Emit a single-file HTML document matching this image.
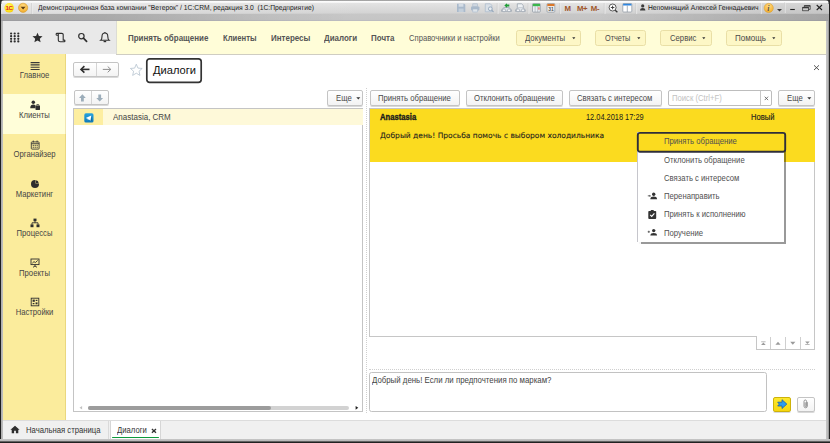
<!DOCTYPE html>
<html lang="ru">
<head>
<meta charset="utf-8">
<title>Диалоги</title>
<style>
html,body{margin:0;padding:0;}
body{width:830px;height:443px;overflow:hidden;position:relative;background:#fff;font-family:"Liberation Sans",sans-serif;font-size:7.7px;color:#333;}
.abs{position:absolute;}
.sq{font-size:8.500px !important;transform:scaleX(.906);transform-origin:0 50%;}
.sqc{font-size:8.400px !important;transform:scaleX(.917);transform-origin:50% 50%;}
.t{position:absolute;white-space:nowrap;line-height:1;}
/* window frame */
#frame{left:0;top:0;width:830px;height:443px;background:#8a8a8a;}
#titlebar{left:0;top:0;width:830px;height:21px;background:linear-gradient(#9c9c9c 0,#a6a6a6 0.6px,#fdfdfd 1.1px,#f8f8f8 2.4px,#e3e3e3 3.2px,#d4d4d4 12.8px,#c7c7c7 14.2px,#c5c5c5 20.1px,#bcbcc0 20.5px,#bcbcc0 21px);}
#frameL{left:0;top:21px;width:3.4px;height:422px;background:linear-gradient(90deg,#1c1c1c 0,#222 1px,#b0b0b0 1.5px,#c6c6c6 3.4px);}
#frameR{left:826px;top:21px;width:4px;height:422px;background:linear-gradient(90deg,#c8c8c8 0,#b4b4b4 2.4px,#2a2a2a 3px,#1c1c1c 4px);}
#frameB{left:0;top:439px;width:830px;height:4px;background:linear-gradient(#c8c8c8 0,#b4b4b4 2.2px,#2a2a2a 2.7px,#1c1c1c 4px);}
#client{left:3px;top:21px;width:823px;height:418px;background:#fff;}
/* tools panel */
#tools{left:3px;top:21px;width:113px;height:33px;background:#e9e9e9;}
#topnav{left:116px;top:21px;width:710px;height:33px;background:#fffdd8;border-left:1px solid #dcdcd4;box-sizing:border-box;}
#sidebar{left:3px;top:54px;width:63.300px;height:366px;background:#fbec9c;}
#sidesel{left:3px;top:94px;width:63px;height:40px;background:#fffed9;}
#tabbar{left:3px;top:420px;width:823px;height:19px;background:#f0f0f0;border-top:1px solid #dcdcdc;box-sizing:border-box;}
.nav{font-size:8.400px;font-weight:bold;color:#555;top:33.600px;transform:scaleX(.952);transform-origin:0 50%;}
.navn{font-size:8.400px;color:#555;top:33.600px;}
.ybtn{position:absolute;top:30px;height:15.500px;box-sizing:border-box;border:1px solid #e9dfa6;border-radius:2.500px;background:#fdf7c6;font-size:8.400px;color:#4a4a4a;text-align:left;}
.btn{position:absolute;box-sizing:border-box;border:1px solid #c4c4c4;border-radius:2px;background:linear-gradient(#fff,#f3f3f3);font-size:7.7px;color:#444;box-shadow:0 1px 0 #d9d9d9;}
.btn .t{top:3.200px;color:#4a4a4a;font-size:8.500px;transform:scaleX(.906);transform-origin:0 50%;}
.side{font-size:7.7px;color:#444;text-align:center;width:63px;left:3px;}
.mi{font-size:7.7px;color:#505050;left:664.300px;}
</style>
</head>
<body>
<div id="frame" class="abs"></div>
<div id="client" class="abs"></div>
<div id="titlebar" class="abs"></div>
<div class="abs" style="left:0;top:13.500px;width:830px;height:7.500px;background:linear-gradient(90deg,rgba(0,0,0,.17) 0,rgba(0,0,0,.15) 12%,rgba(0,0,0,.04) 32%,rgba(0,0,0,0) 42%,rgba(0,0,0,0) 72%,rgba(0,0,0,.10) 88%,rgba(0,0,0,.17) 100%);"></div>
<div class="abs" style="left:0;top:2.500px;width:830px;height:11px;background:linear-gradient(90deg,rgba(255,255,255,.25) 0,rgba(255,255,255,.1) 25%,rgba(0,0,0,0) 45%,rgba(0,0,0,0) 75%,rgba(0,0,0,.07) 100%);"></div>
<div id="tools" class="abs"></div>
<div id="topnav" class="abs"></div>
<div id="sidebar" class="abs"></div>
<div id="sidesel" class="abs"></div>
<div class="abs" style="left:65px;top:54px;width:1.300px;height:366px;background:#ead77e;"></div>
<div class="abs" style="left:65px;top:94px;width:1.300px;height:40px;background:#efe5b0;"></div>
<div id="tabbar" class="abs"></div>
<div id="frameL" class="abs"></div>
<div id="frameR" class="abs"></div>
<div id="frameB" class="abs"></div>
<div class="abs" style="left:0;top:0;width:1.300px;height:21px;background:#222;"></div>
<div class="abs" style="left:828.600px;top:0;width:1.400px;height:21px;background:#222;"></div>
<svg class="abs" style="left:0;top:0;" width="830" height="4" viewBox="0 0 830 4"><path d="M0 0H4.500A3.200 3.200 0 0 0 1.300 3.200V4H0Z" fill="#2a2a2a"/><path d="M830 0H825.400A3.200 3.200 0 0 1 828.600 3.200V4H830Z" fill="#2a2a2a"/></svg>


<!-- tools icons -->
<svg class="abs" style="left:9px;top:31px;" width="12" height="12" viewBox="0 0 12 12">
 <g fill="#2e2e2e"><circle cx="2.1" cy="2.5" r="1.12"/><circle cx="5.7" cy="2.5" r="1.12"/><circle cx="9.3" cy="2.5" r="1.12"/>
 <circle cx="2.1" cy="5.2" r="1.12"/><circle cx="5.7" cy="5.2" r="1.12"/><circle cx="9.3" cy="5.2" r="1.12"/>
 <circle cx="2.1" cy="7.8" r="1.12"/><circle cx="5.7" cy="7.8" r="1.12"/><circle cx="9.3" cy="7.8" r="1.12"/>
 <circle cx="2.1" cy="10.4" r="1.12"/><circle cx="5.7" cy="10.4" r="1.12"/><circle cx="9.3" cy="10.4" r="1.12"/></g>
</svg>
<svg class="abs" style="left:32px;top:32px;" width="11" height="11" viewBox="0 0 24 24"><path fill="#2e2e2e" d="M12 1.5l3.1 7.3 7.9.7-6 5.2 1.8 7.8L12 18.3 5.2 22.500l1.800-7.800-6-5.200 7.900-.700z"/></svg>
<svg class="abs" style="left:55px;top:32px;" width="11" height="11" viewBox="0 0 11 11"><path fill="none" stroke="#2e2e2e" stroke-width="1.1" d="M3.3 3.200V1.400H1.700C.9 1.400.9 3.200 1.700 3.200H3.300V8.200C3.300 9.800 5 9.800 5.300 9.800H9.200C10.200 9.800 10.200 8.100 9.200 8.100H8.200V2.600C8.200 1.400 7.200 1.400 6.800 1.400H3.300"/></svg>
<svg class="abs" style="left:77px;top:32px;" width="11" height="11" viewBox="0 0 11 11"><circle cx="4.400" cy="4.200" r="2.700" fill="none" stroke="#2e2e2e" stroke-width="1.200"/><path d="M6.400 6.200L9.600 9.400" stroke="#2e2e2e" stroke-width="1.700" stroke-linecap="round"/></svg>
<svg class="abs" style="left:99px;top:31px;" width="12" height="12" viewBox="0 0 12 12"><path fill="none" stroke="#2e2e2e" stroke-width="1.100" d="M1.700 9.200H10.100C9 8.300 8.800 7.400 8.800 5.400C8.800 3.300 7.500 2 5.900 2C4.300 2 3 3.300 3 5.400C3 7.400 2.800 8.300 1.700 9.200Z"/><path d="M4.600 10.600H7.200" stroke="#2e2e2e" stroke-width="1.200"/><path d="M5.900 1V2" stroke="#2e2e2e" stroke-width="1.100"/></svg>


<!-- titlebar icons -->
<svg class="abs" style="left:0;top:0;" width="830" height="21" viewBox="0 0 830 21">
 <defs>
  <radialGradient id="g1c" cx="0.45" cy="0.35" r="0.7"><stop offset="0" stop-color="#fff56a"/><stop offset="0.7" stop-color="#ffe21a"/><stop offset="1" stop-color="#f3c40e"/></radialGradient>
  <radialGradient id="gdd" cx="0.5" cy="0.3" r="0.8"><stop offset="0" stop-color="#ffd980"/><stop offset="0.7" stop-color="#f6b73c"/><stop offset="1" stop-color="#e09a20"/></radialGradient>
 </defs>
 <circle cx="9.200" cy="7.800" r="4.800" fill="url(#g1c)"/>
 <text x="5.600" y="10.100" font-family="Liberation Sans, sans-serif" font-weight="bold" font-size="6.200" fill="#e31e24" letter-spacing="-0.600">1С</text>
 <circle cx="23.100" cy="7.800" r="4.600" fill="url(#gdd)" stroke="#d69a2c" stroke-width="0.600"/>
 <path d="M20.600 6.700H25.600L23.100 9.600Z" fill="#5a3a10"/>
 <path d="M31.500 3V14" stroke="#c4c4c4" stroke-width="0.700"/><path d="M32.200 3V14" stroke="#f2f2f2" stroke-width="0.700"/>
 <!-- save -->
 <g fill="#a9b9cb"><path d="M457 3.700H464.300L465.300 4.700V12H457Z"/></g>
 <rect x="458.600" y="3.700" width="4.800" height="3" fill="#d5dde6"/><rect x="458.600" y="8.600" width="5" height="3.400" fill="#c3cfdb"/>
 <!-- print -->
 <g><rect x="472.800" y="3.800" width="4.800" height="3" fill="#cfd7e0" stroke="#a9b9cb" stroke-width="0.600"/><rect x="471" y="6.400" width="8.400" height="4" rx="0.800" fill="#a9b9cb"/><rect x="472.800" y="9" width="4.800" height="3" fill="#dfe5ea" stroke="#a9b9cb" stroke-width="0.600"/></g>
 <!-- preview -->
 <g><path d="M485.300 3.800H490.300L491.800 5.300V11.800H485.300Z" fill="#d9e0e7" stroke="#a9b9cb" stroke-width="0.700"/><circle cx="490.300" cy="8.800" r="1.900" fill="#e8edf2" stroke="#94a7bb" stroke-width="0.900"/><path d="M491.700 10.200L493.500 12" stroke="#94a7bb" stroke-width="1.100"/></g>
 <path d="M497.300 3V14" stroke="#c4c4c4" stroke-width="0.700"/><path d="M498 3V14" stroke="#f2f2f2" stroke-width="0.700"/>
 <!-- link1 -->
 <g><path d="M501.500 11.300C501.500 9.300 503 8 504.500 7.500H508.500C510 8 511.500 9.300 511.500 11.300Z" fill="#dfe3e8" stroke="#8e99a6" stroke-width="0.700"/><circle cx="504" cy="10.300" r="1.500" fill="#f4f6f8" stroke="#8e99a6" stroke-width="0.600"/><circle cx="509" cy="10.300" r="1.500" fill="#f4f6f8" stroke="#8e99a6" stroke-width="0.600"/><path d="M504.300 5.500L507 3.200V4.600H509.300V6.500H507V7.800Z" fill="#1f9d36"/></g>
 <!-- link2 -->
 <g><path d="M515.500 11.300C515.500 9.300 517 8 518.500 7.500H522.500C524 8 525.300 9.300 525.300 11.300Z" fill="#dfe3e8" stroke="#8e99a6" stroke-width="0.700"/><path d="M517.300 7.600V3.800H521.500L523.300 5.500V7.600" fill="#eef1f4" stroke="#8e99a6" stroke-width="0.700"/><circle cx="518" cy="10.300" r="1.500" fill="#f4f6f8" stroke="#8e99a6" stroke-width="0.600"/><circle cx="523" cy="10.300" r="1.500" fill="#f4f6f8" stroke="#8e99a6" stroke-width="0.600"/></g>
 <path d="M528.200 3V14" stroke="#c4c4c4" stroke-width="0.700"/><path d="M528.900 3V14" stroke="#f2f2f2" stroke-width="0.700"/>
 <!-- calc -->
 <g><rect x="532.500" y="3.600" width="7.800" height="8.500" rx="0.800" fill="#eceff2" stroke="#8a949e" stroke-width="0.700"/><rect x="532.800" y="3.900" width="7.200" height="2.300" fill="#3cb64a"/><path d="M535.100 6.200V12M537.700 6.200V12" stroke="#9aa3ad" stroke-width="0.600"/><rect x="538" y="7.300" width="1.800" height="2.300" fill="#e88a8a"/></g>
 <!-- calendar -->
 <g><rect x="547" y="3.600" width="7.800" height="8.500" rx="0.800" fill="#f4f5f6" stroke="#8a949e" stroke-width="0.700"/><rect x="547.300" y="3.900" width="7.200" height="2.200" fill="#d9772b"/><text x="548.200" y="11.200" font-family="Liberation Sans, sans-serif" font-size="5" font-weight="bold" fill="#555">31</text></g>
 <path d="M560 3V14" stroke="#c4c4c4" stroke-width="0.700"/><path d="M560.700 3V14" stroke="#f2f2f2" stroke-width="0.700"/>
 <g font-family="Liberation Sans, sans-serif" font-weight="bold" font-size="7.800" fill="#a0562a"><text x="564.600" y="10.700">M</text><text x="577" y="10.700" letter-spacing="-0.600">M+</text><text x="590.800" y="10.700" letter-spacing="-0.300">M-</text></g>
 <path d="M604.300 3V14" stroke="#c4c4c4" stroke-width="0.700"/><path d="M605 3V14" stroke="#f2f2f2" stroke-width="0.700"/>
 <!-- zoom -->
 <g><circle cx="612.600" cy="7.500" r="3.500" fill="#fff" stroke="#333" stroke-width="0.800"/><path d="M610.800 7.500H614.400M612.600 5.700V9.300" stroke="#333" stroke-width="0.900"/><path d="M615.200 10.200L617.400 12.300" stroke="#333" stroke-width="1.300"/></g>
 <!-- panel -->
 <g><rect x="622.800" y="3.500" width="9" height="8.500" rx="0.800" fill="#fff" stroke="#8a949e" stroke-width="0.700"/><rect x="623.100" y="3.800" width="8.400" height="1.700" fill="#2f86e0"/><path d="M627.300 5.500V12" stroke="#8a949e" stroke-width="0.700"/></g>
 <path d="M636 3V14" stroke="#c4c4c4" stroke-width="0.700"/><path d="M636.700 3V14" stroke="#f2f2f2" stroke-width="0.700"/>
 <!-- user -->
 <g fill="#3a3a3a"><circle cx="642.700" cy="5.900" r="1.600"/><path d="M640 10.600C640 8.600 641.300 7.900 642.700 7.900C644.100 7.900 645.400 8.600 645.400 10.600Z"/></g>
 <path d="M760.600 3V14" stroke="#c4c4c4" stroke-width="0.700"/><path d="M761.300 3V14" stroke="#f2f2f2" stroke-width="0.700"/>
 <!-- info -->
 <circle cx="768.700" cy="8" r="4.600" fill="url(#gdd)" stroke="#dca238" stroke-width="0.600"/>
 <text x="767.300" y="10.700" font-family="Liberation Serif, serif" font-weight="bold" font-style="italic" font-size="8" fill="#5c5648">i</text>
 <path d="M777 9H782L779.500 11.400Z" fill="#3a3a3a"/>
 <path d="M784.500 2.500V13" stroke="#c4c4c4" stroke-width="0.700"/><path d="M785.200 2.500V13" stroke="#f2f2f2" stroke-width="0.700"/>
 <path d="M790.200 9.500H794.800" stroke="#222" stroke-width="1.100"/>
 <g fill="none" stroke="#2a2a2a" stroke-width="0.700"><path d="M804.300 7.200V5.600H810.200V9.400H808.500"/><rect x="802.700" y="7.300" width="5.800" height="3.500" fill="none"/></g>
 <path d="M802.700 7.700H808.500M804.300 6H810.200" stroke="#2a2a2a" stroke-width="1.100"/>
 <path d="M816.700 5L822 10M822 5L816.700 10" stroke="#222" stroke-width="1.050"/>
</svg>

<!-- title -->
<span class="t" id="title" style="left:38.4px;top:3.7px;font-size:7.3px;transform:scaleX(.922);transform-origin:0 50%;color:#1a1a1a;text-rendering:geometricPrecision;">Демонстрационная база компании "Ветерок" / 1С:CRM, редакция 3.0&nbsp; (1С:Предприятие)</span>
<span class="t" id="user" style="left:647.8px;top:3.7px;font-size:7.3px;transform:scaleX(.918);transform-origin:0 50%;color:#1a1a1a;text-rendering:geometricPrecision;">Непомнящий Алексей Геннадьевич</span>

<!-- top nav -->
<span class="t nav" style="left:127.600px;">Принять обращение</span>
<span class="t nav" style="left:222.800px;transform:scaleX(.918);">Клиенты</span>
<span class="t nav" style="left:271.400px;">Интересы</span>
<span class="t nav" style="left:324px;">Диалоги</span>
<span class="t nav" style="left:371.400px;">Почта</span>
<span class="t navn" style="left:408.800px;transform:scaleX(.911);transform-origin:0 50%;">Справочники и настройки</span>
<div class="ybtn" style="left:516.4px;width:64.4px;"><span class="t" style="left:7.6px;top:2.900px;transform:scaleX(.928);transform-origin:0 50%;">Документы</span><svg class="abs" style="left:54.2px;top:6px;" width="4" height="3" viewBox="0 0 4 3"><path d="M0.200 0.300H3.400L1.800 2.300Z" fill="#333"/></svg></div>
<div class="ybtn" style="left:595.0px;width:50.6px;"><span class="t" style="left:8.7px;top:2.900px;transform:scaleX(.873);transform-origin:0 50%;">Отчеты</span><svg class="abs" style="left:41.2px;top:6px;" width="4" height="3" viewBox="0 0 4 3"><path d="M0.200 0.300H3.400L1.800 2.300Z" fill="#333"/></svg></div>
<div class="ybtn" style="left:660.0px;width:51.8px;"><span class="t" style="left:8.7px;top:2.900px;transform:scaleX(.921);transform-origin:0 50%;">Сервис</span><svg class="abs" style="left:41.4px;top:6px;" width="4" height="3" viewBox="0 0 4 3"><path d="M0.200 0.300H3.400L1.800 2.300Z" fill="#333"/></svg></div>
<div class="ybtn" style="left:725.5px;width:56.0px;"><span class="t" style="left:8.7px;top:2.900px;transform:scaleX(.955);transform-origin:0 50%;">Помощь</span><svg class="abs" style="left:45.5px;top:6px;" width="4" height="3" viewBox="0 0 4 3"><path d="M0.200 0.300H3.400L1.800 2.300Z" fill="#333"/></svg></div>

<!-- sidebar icons -->
<svg class="abs" style="left:29.500px;top:60.500px;" width="10" height="10" viewBox="0 0 10 10"><path d="M0.600 1.600H9.600M0.600 3.900H9.600M0.600 6.200H9.600M0.600 8.500H9.600" stroke="#3a3a3a" stroke-width="1.150"/></svg>
<svg class="abs" style="left:29.500px;top:99.500px;" width="10" height="10" viewBox="0 0 10 10"><g fill="#2e2e2e"><circle cx="3.300" cy="2.200" r="1.750"/><path d="M0.200 8.200C0.200 5.600 1.600 4.600 3.300 4.600C4.300 4.600 5 4.900 5.500 5.500V8.200Z"/><rect x="5.500" y="5.400" width="4.500" height="4.500" rx="0.400"/><path d="M6.800 5.500V4.500H8.700V5.500" fill="none" stroke="#2e2e2e" stroke-width="0.700"/></g></svg>
<svg class="abs" style="left:29.500px;top:139.500px;" width="10" height="10" viewBox="0 0 10 10"><rect x="1.300" y="1.900" width="7.800" height="7.200" rx="0.700" fill="none" stroke="#3a3a3a" stroke-width="0.900"/><path d="M1.300 3.700H9.100" stroke="#3a3a3a" stroke-width="0.900"/><path d="M3.300 0.600V2.400M7.100 0.600V2.400" stroke="#3a3a3a" stroke-width="1"/><g fill="#3a3a3a"><rect x="2.700" y="4.800" width="1.100" height="1.100"/><rect x="4.650" y="4.800" width="1.100" height="1.100"/><rect x="6.600" y="4.800" width="1.100" height="1.100"/><rect x="2.700" y="6.700" width="1.100" height="1.100"/><rect x="4.650" y="6.700" width="1.100" height="1.100"/><rect x="6.600" y="6.700" width="1.100" height="1.100"/></g></svg>
<svg class="abs" style="left:29.500px;top:178.700px;" width="10" height="10" viewBox="0 0 10 10"><circle cx="5" cy="5" r="4" fill="#2e2e2e"/><path d="M5.500 4.500V0.500A4 4 0 0 1 9.500 4.500Z" fill="#fbec9c"/><path d="M5.800 4.200V1.300A3.200 3.200 0 0 1 8.700 4.200Z" fill="#2e2e2e"/></svg>
<svg class="abs" style="left:29.500px;top:218.200px;" width="10" height="10" viewBox="0 0 10 10"><g fill="#2e2e2e"><rect x="3.500" y="0.600" width="3" height="2.600"/><rect x="0.500" y="6.400" width="3" height="2.800"/><rect x="6.500" y="6.400" width="3" height="2.800"/></g><path d="M5 3V4.800M2 6.500V4.800H8V6.500" fill="none" stroke="#2e2e2e" stroke-width="0.900"/></svg>
<svg class="abs" style="left:29.500px;top:257.500px;" width="10" height="10" viewBox="0 0 10 10"><rect x="1" y="1" width="8" height="5.600" fill="none" stroke="#2e2e2e" stroke-width="0.900"/><path d="M2.300 5.200L4 3.600L5.400 4.600L7.700 2.400" fill="none" stroke="#2e2e2e" stroke-width="0.900"/><path d="M5 6.600V8.300M3 9.300L5 8L7 9.300" fill="none" stroke="#2e2e2e" stroke-width="0.900"/></svg>
<svg class="abs" style="left:29.500px;top:297.200px;" width="10" height="10" viewBox="0 0 10 10"><rect x="1.200" y="1.200" width="7.600" height="7.600" fill="none" stroke="#2e2e2e" stroke-width="0.900"/><g fill="#2e2e2e"><rect x="2.600" y="2.600" width="2.200" height="2.200"/><rect x="5.600" y="5.400" width="1.900" height="1.900"/><rect x="2.700" y="6" width="1.700" height="1.200"/><rect x="5.700" y="2.800" width="1.700" height="1.200"/></g></svg>

<!-- sidebar labels -->
<span class="t side sqc" style="top:71.4px;">Главное</span>
<span class="t side sqc" style="top:110.9px;">Клиенты</span>
<span class="t side sqc" style="top:150.4px;">Органайзер</span>
<span class="t side sqc" style="top:189.9px;">Маркетинг</span>
<span class="t side sqc" style="top:229.4px;">Процессы</span>
<span class="t side sqc" style="top:268.9px;">Проекты</span>
<span class="t side sqc" style="top:308.4px;">Настройки</span>

<!-- header -->
<div class="btn" style="left:73.400px;top:62px;width:45.200px;height:14.800px;"></div>
<div class="abs" style="left:96px;top:63px;width:0.800px;height:13px;background:#d4d4d4;"></div>
<svg class="abs" style="left:74px;top:62px;" width="74" height="16" viewBox="0 0 74 16">
 <path d="M7.200 7.400H15.500" stroke="#2e2e2e" stroke-width="1.600"/><path d="M10.400 4.200L7 7.400L10.400 10.600" fill="none" stroke="#2e2e2e" stroke-width="1.600"/>
 <path d="M28.800 7.400H36.600" stroke="#8c8c8c" stroke-width="1"/><path d="M33.700 4.500L36.800 7.400L33.700 10.300" fill="none" stroke="#8c8c8c" stroke-width="1"/>
 <path d="M62.300 2.200L63.950 6.100L68.200 6.450L65 9.250L65.950 13.400L62.300 11.200L58.650 13.400L59.600 9.250L56.400 6.450L60.650 6.100Z" fill="#fff" stroke="#b4c2ce" stroke-width="0.800" stroke-linejoin="round"/>
</svg>
<svg class="abs" style="left:145px;top:57px;" width="58" height="27" viewBox="0 0 58 27"><rect x="1.800" y="1.800" width="54.400" height="23.600" rx="2.800" fill="#fff" stroke="#333" stroke-width="1.700"/></svg>
<span class="t" style="left:153px;top:64.800px;font-size:11.100px;color:#111;">Диалоги</span>
<svg class="abs" style="left:813px;top:64px;" width="7" height="7" viewBox="0 0 7 7"><path d="M1 1.300L6 6M6 1.300L1 6" stroke="#444" stroke-width="0.900"/></svg>
<div class="abs" style="left:116px;top:53.500px;width:710px;height:0.900px;background:#cfcdc2;"></div>

<!-- left list -->
<div class="btn" style="left:73.700px;top:90.400px;width:35.800px;height:15px;"></div>
<div class="abs" style="left:91px;top:91.400px;width:0.800px;height:13px;background:#d4d4d4;"></div>
<svg class="abs" style="left:74px;top:90px;" width="36" height="16" viewBox="0 0 36 16">
 <path d="M8.400 4.300L11.800 7.900H9.800V11.400H7V7.900H5Z" fill="#9cadba"/>
 <path d="M25.700 11.500L29.100 7.900H27.100V4.400H24.300V7.900H22.300Z" fill="#9cadba"/>
</svg>
<div class="btn" style="left:327px;top:90px;width:36px;height:15.600px;"><span class="t" style="left:7.500px;">Еще</span><svg class="abs" style="left:27.500px;top:6.400px;" width="5" height="3" viewBox="0 0 5 3"><path d="M0.300 0.200H4.300L2.300 2.500Z" fill="#333"/></svg></div>
<div class="abs" style="left:73px;top:108.400px;width:290px;height:304px;box-sizing:border-box;border:1px solid #c4c4c4;background:#fff;"></div>
<div class="abs" style="left:74.300px;top:109.200px;width:28.700px;height:15.900px;background:#fdeea0;"></div>
<div class="abs" style="left:103px;top:109.200px;width:259.500px;height:15.900px;background:#fef9d9;"></div>
<svg class="abs" style="left:84px;top:112.700px;" width="10" height="10" viewBox="0 0 10 10"><defs><linearGradient id="tg" x1="0" y1="0" x2="0" y2="1"><stop offset="0" stop-color="#27a3df"/><stop offset="1" stop-color="#0f79b8"/></linearGradient></defs><rect x="0.300" y="0.300" width="9.200" height="9.200" rx="1.600" fill="url(#tg)"/><path d="M1.700 4.900L7.300 2.400L6.600 7.800L4.600 6.300L3.900 7.300L3.700 5.700Z" fill="#fff"/><path d="M7.300 2.400L6.600 7.800L8.300 8.300Z" fill="#0c5c8e" opacity="0.600"/></svg>
<span class="t sq" style="left:113.400px;top:112.800px;color:#444;transform:scaleX(.941);">Anastasia, CRM</span>

<!-- list scrollbar -->
<div class="abs" style="left:88.400px;top:405.700px;width:260.300px;height:4.100px;border-radius:2.050px;background:#d2d2d2;"></div>
<div class="abs" style="left:88.400px;top:405.700px;width:182.500px;height:4.100px;border-radius:2.050px;background:#9c9c9c;"></div>
<svg class="abs" style="left:79px;top:405px;" width="4" height="6" viewBox="0 0 4 6"><path d="M3.100 1.100V4.600L0.500 2.850Z" fill="#c2c2c2"/></svg>
<svg class="abs" style="left:354.500px;top:405px;" width="4" height="6" viewBox="0 0 4 6"><path d="M0.600 1V4.700L3.300 2.850Z" fill="#222"/></svg>

<!-- right -->
<div class="btn" style="left:369.500px;top:90px;width:90.300px;height:15.600px;"><span class="t" style="left:7.400px;">Принять обращение</span></div>
<div class="btn" style="left:465.800px;top:90px;width:97.500px;height:15.600px;"><span class="t" style="left:7.400px;">Отклонить обращение</span></div>
<div class="btn" style="left:569px;top:90px;width:93px;height:15.600px;"><span class="t" style="left:7.400px;">Связать с интересом</span></div>
<div class="btn" style="left:668px;top:90.400px;width:104px;height:15.200px;background:#fff;border-color:#bdbdbd;box-shadow:none;"><span class="t" style="left:2.600px;top:3px;color:#c2c2c2;">Поиск (Ctrl+F)</span><div class="abs" style="left:91px;top:0;width:1px;height:13.200px;background:#c8c8c8;"></div><svg class="abs" style="left:94.500px;top:4.500px;" width="5" height="5" viewBox="0 0 5 5"><path d="M0.700 0.700L4.100 4.100M4.100 0.700L0.700 4.100" stroke="#555" stroke-width="0.800"/></svg></div>
<div class="btn" style="left:778px;top:90px;width:36.800px;height:15.600px;"><span class="t" style="left:7.500px;">Еще</span><svg class="abs" style="left:27.800px;top:6.400px;" width="5" height="3" viewBox="0 0 5 3"><path d="M0.300 0.200H4.300L2.300 2.500Z" fill="#333"/></svg></div>

<div class="abs" style="left:369px;top:108px;width:446px;height:229px;box-sizing:border-box;border:1px solid #c6c6c6;background:#fff;"></div>
<div class="abs" style="left:370px;top:108.600px;width:444.600px;height:53.100px;background:#fbdb1f;"></div>
<span class="t" style="left:380px;top:113.300px;font-weight:bold;font-size:8.400px;-webkit-text-stroke:0.350px #1c1c1c;transform:scaleX(.915);transform-origin:0 50%;color:#1c1c1c;">Anastasia</span>
<span class="t" style="left:586.300px;top:112.900px;font-size:8.400px;transform:scaleX(.884);transform-origin:0 50%;color:#1c1c1c;">12.04.2018 17:29</span>
<span class="t" style="left:750.700px;top:112.900px;font-size:8.400px;-webkit-text-stroke:0.150px #1c1c1c;transform:scaleX(.905);transform-origin:0 50%;color:#1c1c1c;">Новый</span>
<span class="t" style="left:380px;top:131.700px;font-family:'DejaVu Sans','Liberation Sans',sans-serif;font-size:7.530px;color:#1c1c1c;-webkit-text-stroke:0.100px #1c1c1c;">Добрый день! Просьба помочь с выбором холодильника</span>

<!-- popup -->
<div class="abs" style="left:637px;top:132px;width:146.500px;height:109.700px;background:#fff;box-shadow:1.500px 1.500px 0.700px rgba(0,0,0,.40);border-left:1px solid #c6c6cc;box-sizing:border-box;"></div>
<svg class="abs" style="left:636px;top:131px;" width="151" height="23" viewBox="0 0 151 23"><rect x="1.800" y="1.900" width="147.400" height="18.900" rx="2.200" fill="#fbdb1f" stroke="#2e2e3a" stroke-width="1.900"/></svg>
<span class="t mi sq" style="top:137.400px;">Принять обращение</span>
<span class="t mi sq" style="top:156.100px;">Отклонить обращение</span>
<span class="t mi sq" style="top:173.700px;">Связать с интересом</span>
<span class="t mi sq" style="top:192.100px;">Перенаправить</span>
<span class="t mi sq" style="top:210.200px;">Принять к исполнению</span>
<span class="t mi sq" style="top:228.600px;">Поручение</span>
<svg class="abs" style="left:647px;top:191px;" width="11" height="11" viewBox="0 0 11 11"><g fill="#333"><circle cx="6.700" cy="3.300" r="1.700"/><path d="M3.300 8.300C3.300 6.300 4.800 5.600 6.700 5.600C8.600 5.600 10.100 6.300 10.100 8.300Z"/><path d="M0.800 4.500H2.600V3.700L3.900 4.900L2.600 6.100V5.300H0.800Z"/></g></svg>
<svg class="abs" style="left:647px;top:209px;" width="11" height="11" viewBox="0 0 11 11"><rect x="1.300" y="1.900" width="7.900" height="8" rx="0.900" fill="#333"/><rect x="3.700" y="0.900" width="3.100" height="1.900" rx="0.600" fill="#333"/><path d="M3.200 5.900L4.700 7.400L7.400 4.400" fill="none" stroke="#fff" stroke-width="1.100"/></svg>
<svg class="abs" style="left:647px;top:227px;" width="11" height="11" viewBox="0 0 11 11"><g fill="#333"><circle cx="6.700" cy="3.600" r="1.700"/><path d="M3.300 8.600C3.300 6.600 4.800 5.900 6.700 5.900C8.600 5.900 10.100 6.600 10.100 8.600Z"/></g><path d="M0.700 4.800H2.900M1.800 3.700V5.900" stroke="#333" stroke-width="0.700"/></svg>

<!-- nav buttons under messages -->
<div class="abs" style="left:756px;top:336px;width:59px;height:13.500px;box-sizing:border-box;border:1px solid #c6c6c6;border-top:none;background:#fff;"></div>
<div class="abs" style="left:770.400px;top:337px;width:0.800px;height:12px;background:#cfcfcf;"></div>
<div class="abs" style="left:785.100px;top:337px;width:0.800px;height:12px;background:#cfcfcf;"></div>
<div class="abs" style="left:799.800px;top:337px;width:0.800px;height:12px;background:#cfcfcf;"></div>
<svg class="abs" style="left:756px;top:337px;" width="59" height="12" viewBox="0 0 59 12">
 <g fill="#9a9a9a"><path d="M5.200 4.500H9.600V5.200H5.200Z"/><path d="M7.400 5.400L9.700 8H5.100Z"/>
 <path d="M22 4.700L24.600 7.700H19.400Z"/>
 <path d="M36.800 7.700L39.400 4.700H34.200Z"/>
 <path d="M49.200 7.300H53.600V8H49.200Z"/><path d="M51.400 7.100L53.700 4.500H49.100Z"/></g>
</svg>
<!-- dotted separators -->
<div class="abs" style="left:365.500px;top:88px;width:0;height:325px;border-left:1px dotted #cfcfcf;"></div>
<div class="abs" style="left:369px;top:368.600px;width:446px;height:0;border-top:1px dotted #cfcfcf;"></div>
<!-- input -->
<div class="abs" style="left:369px;top:372px;width:398px;height:40.400px;box-sizing:border-box;border:1px solid #c2c2c2;border-radius:2.500px;background:#fff;"></div>
<span class="t sq" style="left:372px;top:376px;color:#444;transform:scaleX(.923);">Добрый день! Если ли предпочтения по маркам?</span>
<div class="btn" style="left:773.400px;top:396.600px;width:17.800px;height:15px;background:linear-gradient(#fde82c,#f7d70f);border-color:#cdb20a;"></div>
<svg class="abs" style="left:776px;top:398px;" width="13" height="12" viewBox="0 0 13 12"><path d="M1.700 4.200H6V1.700L10.800 6.100L6 10.500V8H1.700L3.300 6.100Z" fill="#2b9cf2" stroke="#1b5fa8" stroke-width="0.800" stroke-linejoin="round"/></svg>
<div class="btn" style="left:796.600px;top:396.600px;width:18px;height:15px;"></div>
<svg class="abs" style="left:801px;top:398px;" width="9" height="12" viewBox="0 0 9 12"><path d="M6.300 4.100V8.300C6.300 10.300 3 10.300 3 8.300V3.300C3 1.500 5.600 1.500 5.600 3.300V7.900C5.600 8.900 4.200 8.900 4.200 7.900V4.300" fill="none" stroke="#8a8a8a" stroke-width="0.900"/></svg>

<!-- tabs -->
<svg class="abs" style="left:10px;top:425px;" width="10" height="9" viewBox="0 0 10 9"><path d="M5 0.700L9.600 4.800H8.300V8.300H5.900V5.700H4.100V8.300H1.700V4.800H0.400Z" fill="#2e2e2e"/></svg>
<span class="t sq" style="left:25.600px;top:425.600px;color:#333;">Начальная страница</span>
<div class="abs" style="left:108px;top:421px;width:1px;height:18px;background:#dadada;"></div>
<div class="abs" style="left:110px;top:420.500px;width:51px;height:18.500px;background:#fff;border-left:1px solid #d6d6d6;border-right:1px solid #d6d6d6;box-sizing:border-box;"></div>
<span class="t sq" style="left:116.500px;top:425.600px;color:#333;">Диалоги</span>
<svg class="abs" style="left:150.500px;top:427.500px;" width="6" height="6" viewBox="0 0 6 6"><path d="M0.900 0.900L5 4.700M5 0.900L0.900 4.700" stroke="#333" stroke-width="1.300"/></svg>
<div class="abs" style="left:112.200px;top:436.700px;width:46.400px;height:1.400px;background:#0c9a3c;border-radius:0.700px;"></div>
</body>
</html>
